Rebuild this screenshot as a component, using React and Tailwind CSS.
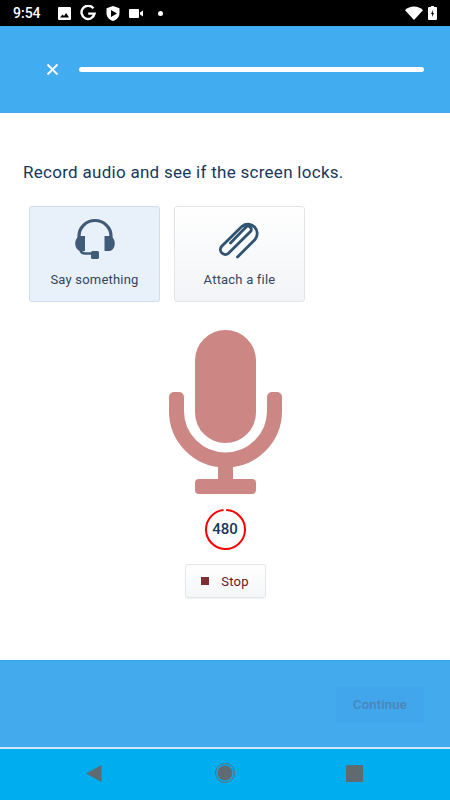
import React from 'react';

const StatusBar = () => (
    <div className="h-[26px] bg-black flex items-center text-white shrink-0">
        <span className="ml-[13px] w-[30px] text-[14px] font-medium leading-none font-['Roboto',sans-serif]">9:54</span>
        <svg className="ml-[15px]" width="13" height="13" viewBox="0 0 13 13">
            <path fill="#fff" fillRule="evenodd" d="M1 0h11a1 1 0 0 1 1 1v11a1 1 0 0 1-1 1H1a1 1 0 0 1-1-1V1a1 1 0 0 1 1-1zM2 10.5h9L8.2 6 6 9 4.5 7.5z" />
        </svg>
        <svg className="ml-[9px]" width="16" height="16" viewBox="0 0 16 16">
            <path fill="none" stroke="#fff" strokeWidth="2.4" d="M13.4 3.4A6.6 6.6 0 1 0 14.6 8.6H8.2" />
        </svg>
        <svg className="ml-[10px]" width="14" height="15" viewBox="0 0 14 15">
            <path fill="#fff" fillRule="evenodd" d="M7 0l6.500 2.200v5c0 3.600-2.600 6.400-6.500 7.800C3.100 13.600.5 10.800.5 7.200v-5zM5 4v7l6-3.500z" />
        </svg>
        <svg className="ml-[9px]" width="15" height="11" viewBox="0 0 15 11">
            <path fill="#fff" d="M1 1h8a1 1 0 0 1 1 1v7a1 1 0 0 1-1 1H1a1 1 0 0 1-1-1V2a1 1 0 0 1 1-1zM11 4.500l3-2v6l-3-2z" />
        </svg>
        <span className="ml-[14px] w-[5px] h-[5px] rounded-full bg-white" />
        <svg className="ml-auto" width="18" height="14" viewBox="0 0 18 14">
            <path fill="#fff" d="M0 4.200C2.400 1.800 5.500.5 9 .5s6.600 1.300 9 3.700L9 14z" />
        </svg>
        <svg className="ml-[5px] mr-[13px]" width="9" height="14" viewBox="0 0 9 14">
            <path fill="#fff" fillRule="evenodd" d="M3 0h3v1h2a1 1 0 0 1 1 1v11a1 1 0 0 1-1 1H1a1 1 0 0 1-1-1V2a1 1 0 0 1 1-1h2zM5 4L3 8h1.200v3L6 7H4.800z" />
        </svg>
    </div>
);

const HeadsetIcon = () => (
    <svg width="60" height="55" viewBox="0 0 60 55" fill="none">
        <path stroke="#3F5B78" strokeWidth="3.200" d="M14 30v-5a16 15.500 0 0 1 32 0v5" />
        <path fill="#3F5B78" d="M15 25h5v15h-5c-3-1-4.800-4-4.800-7.500S12 26 15 25zM39.500 25H45c3 1 4.800 4 4.800 7.500S48 39 45 40h-5.500z" />
        <path stroke="#3F5B78" strokeWidth="2.600" d="M15.500 39c.5 2.700 2.500 3.500 5 3.500H28" />
        <rect x="26" y="40" width="8" height="8" rx="1.500" fill="#3F5B78" />
    </svg>
);

const ClipIcon = () => (
    <svg width="60" height="55" viewBox="0 0 60 55" fill="none">
        <path
            stroke="#2F5370"
            strokeWidth="2.800"
            strokeLinecap="round"
            d="M27.500 46L45 28.500A9.300 9.300 0 0 0 32 15.300L11.500 35.500A4.900 4.900 0 0 0 18.500 42.300L40.500 20.500A3.200 3.200 0 0 0 36 16L20.500 32"
        />
    </svg>
);

const Mic = () => (
    <svg width="113" height="164" viewBox="0 0 113 164" fill="none">
        <rect x="26" y="0" width="61" height="113" rx="30.500" fill="#CC8683" />
        <path stroke="#CC8683" strokeWidth="15" d="M7.500 68V81a49 49 0 0 0 98 0V68" />
        <rect x="0" y="62" width="15" height="14" rx="5" fill="#CC8683" />
        <rect x="98" y="62" width="15" height="14" rx="5" fill="#CC8683" />
        <rect x="49" y="130" width="15" height="22" fill="#CC8683" />
        <rect x="26" y="149" width="61" height="15" rx="4" fill="#CC8683" />
    </svg>
);

const Timer = () => (
    <div className="relative w-[41px] h-[41px] flex items-center justify-center">
        <svg className="absolute inset-0" width="41" height="41" viewBox="0 0 41 41" fill="none">
            <circle
                cx="20.500"
                cy="20.500"
                r="19.500"
                stroke="#FF0000"
                strokeWidth="2"
                strokeDasharray="119 3.500"
                transform="rotate(-88 20.500 20.500)"
            />
        </svg>
        <span className="text-[15px] font-medium text-[#17375E] leading-none">480</span>
    </div>
);

const NavBar = () => (
    <div className="h-[51px] pb-[3px] bg-[#00ADEF] flex items-center shrink-0">
        <svg className="ml-[86px]" width="16" height="17" viewBox="0 0 16 17">
            <path fill="#5F6B70" d="M15.500 0v17L0 8.500z" />
        </svg>
        <svg className="ml-[113px]" width="20" height="20" viewBox="0 0 20 20">
            <circle cx="10" cy="10" r="9.500" fill="none" stroke="#5F6B70" strokeWidth="1" />
            <circle cx="10" cy="10" r="7.500" fill="#5F6B70" />
        </svg>
        <div className="ml-[111px] w-[17px] h-[17px] rounded-[1px] bg-[#5F6B70]" />
    </div>
);

export default function App() {
    return (
        <div className="w-[450px] h-[800px] flex flex-col overflow-hidden bg-white font-['Roboto',sans-serif]">
            <StatusBar />

            <header className="h-[87px] bg-[#42ACF0] flex items-center pl-[46px] pr-[26px] shrink-0">
                <svg width="13" height="13" viewBox="0 0 13 13">
                    <path stroke="#fff" strokeWidth="1.800" d="M1.500 1.500l10 10M11.500 1.500l-10 10" />
                </svg>
                <div className="ml-[20px] flex-1 h-[5px] rounded-full bg-white" />
            </header>

            <main className="flex-1 flex flex-col pt-[49px]">
                <p className="ml-[23px] text-[17px] leading-[20px] tracking-[0.28px] text-[#17375E]">
                    Record audio and see if the screen locks.
                </p>

                <div className="ml-[29px] mt-[24px] flex gap-[14px]">
                    <button className="w-[131px] h-[96px] pt-[4px] flex flex-col items-center rounded-[3px] border border-[#CFDDEC] bg-[#E8F0FA]">
                        <HeadsetIcon />
                        <span className="mt-[5px] text-[13px] leading-[18px] tracking-[0.2px] text-[#33475F]">Say something</span>
                    </button>
                    <button className="w-[131px] h-[96px] pt-[4px] flex flex-col items-center rounded-[3px] border border-[#E1E5EA] bg-gradient-to-b from-white to-[#F2F4F7]">
                        <ClipIcon />
                        <span className="mt-[5px] text-[13px] leading-[18px] tracking-[0.2px] text-[#33475F]">Attach a file</span>
                    </button>
                </div>

                <div className="mt-[28px] flex flex-col items-center">
                    <Mic />
                    <div className="mt-[15px]">
                        <Timer />
                    </div>
                    <button className="mt-[14px] w-[81px] h-[34px] flex items-center justify-center gap-[12px] rounded-[3px] border border-[#E3E6EA] bg-gradient-to-b from-white to-[#F5F6F8] shadow-[0_1px_1px_rgba(0,0,0,0.06)]">
                        <span className="w-[8px] h-[8px] bg-[#7D2F32]" />
                        <span className="text-[13px] leading-none tracking-[0.2px] text-[#6B1616]">Stop</span>
                    </button>
                </div>
            </main>

            <footer className="h-[87px] bg-[#44AAEE] border-t border-[#2FA4F0] flex items-center justify-end pr-[26px] shrink-0">
                <button className="mt-[1px] w-[88px] h-[36px] rounded-[2px] bg-[#41A6EB] text-[13px] font-medium tracking-[0.2px] text-[#4A85B5]">
                    Continue
                </button>
            </footer>
            <div className="h-[2px] bg-[#CFE6F5] shrink-0" />
            <NavBar />
        </div>
    );
}
